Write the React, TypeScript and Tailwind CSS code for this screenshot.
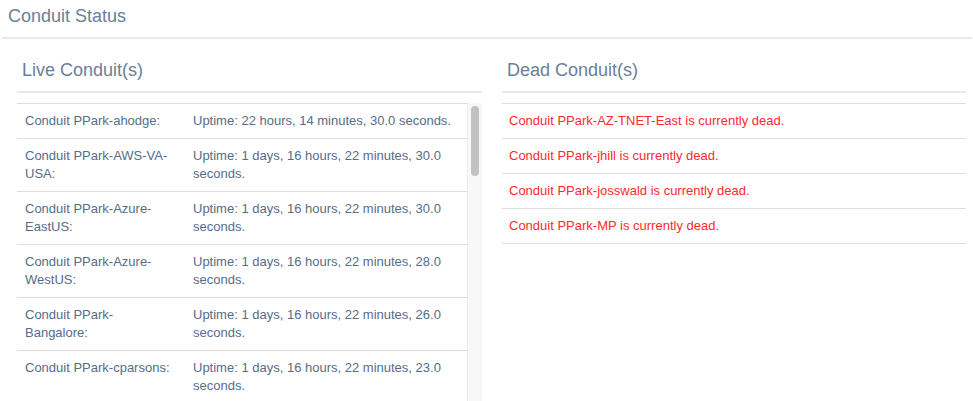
import React from 'react';

const live: { name: string; uptime: string }[] = [
  { name: 'Conduit PPark-ahodge:', uptime: 'Uptime: 22 hours, 14 minutes, 30.0 seconds.' },
  { name: 'Conduit PPark-AWS-VA-USA:', uptime: 'Uptime: 1 days, 16 hours, 22 minutes, 30.0 seconds.' },
  { name: 'Conduit PPark-Azure-EastUS:', uptime: 'Uptime: 1 days, 16 hours, 22 minutes, 30.0 seconds.' },
  { name: 'Conduit PPark-Azure-WestUS:', uptime: 'Uptime: 1 days, 16 hours, 22 minutes, 28.0 seconds.' },
  { name: 'Conduit PPark-Bangalore:', uptime: 'Uptime: 1 days, 16 hours, 22 minutes, 26.0 seconds.' },
  { name: 'Conduit PPark-cparsons:', uptime: 'Uptime: 1 days, 16 hours, 22 minutes, 23.0 seconds.' },
];

const dead = ['PPark-AZ-TNET-East', 'PPark-jhill', 'PPark-josswald', 'PPark-MP'];

export default function App() {
  return (
    <div className="w-[973px] h-[401px] overflow-hidden bg-white font-['Liberation_Sans',Arial,sans-serif] text-[13px] leading-[18px]">
      <div className="pl-[2px] pr-px">
        <div className="h-[39px] pl-[6px] pt-[6px] text-[18px] leading-[20px] text-[#6a7f99] border-b-2 border-[#e6eaf0]">
          Conduit Status
        </div>
      </div>

      <div className="flex pl-[17px] gap-[20px]">
        {/* live */}
        <div className="w-[465px] shrink-0">
          <div className="pt-[21px] pb-[11px] pl-[5px] text-[18px] leading-[20px] text-[#6a7f99] border-b-2 border-[#e6eaf0]">
            Live Conduit(s)
          </div>
          <div className="flex mt-[10px] h-[300px]">
            <div className="w-[450px] border-t border-[#dddddd]">
              <table className="w-full border-collapse text-[#566d89]">
                <tbody>
                  {live.map(r => (
                    <tr key={r.name} className="border-b border-[#dddddd]">
                      <td className="w-[168px] pl-2 pr-[12px] py-2 align-top">{r.name}</td>
                      <td className="px-2 py-2 align-top">{r.uptime}</td>
                    </tr>
                  ))}
                </tbody>
              </table>
            </div>
            <div className="w-[15px] bg-[#f8f8f8] border-l border-[#ececec] pt-[3px] flex justify-center">
              <div className="w-[8px] h-[70px] rounded-full bg-[#c2c2c2]" />
            </div>
          </div>
        </div>

        {/* dead */}
        <div className="w-[464px] shrink-0">
          <div className="pt-[21px] pb-[11px] pl-[5px] text-[18px] leading-[20px] text-[#6a7f99] border-b-2 border-[#e6eaf0]">
            Dead Conduit(s)
          </div>
          <div className="mt-[10px] border-t border-[#dddddd]">
            {dead.map(d => (
              <div key={d} className="px-[7px] py-2 border-b border-[#dddddd] text-[#ff2a2a]">
                Conduit {d} is currently dead.
              </div>
            ))}
          </div>
        </div>
      </div>
    </div>
  );
}
